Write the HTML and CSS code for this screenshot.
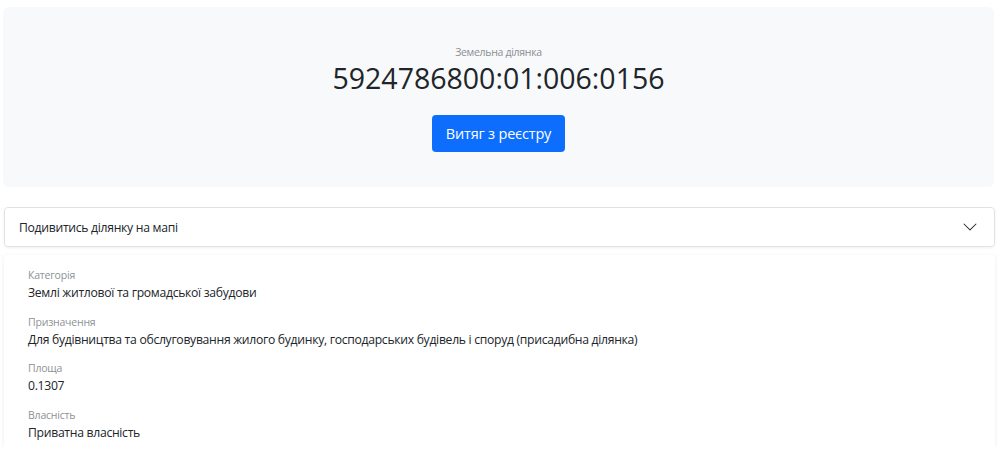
FILE: index.html
```html
<!DOCTYPE html>
<html lang="uk">
<head>
  <meta charset="UTF-8" />
  <meta name="viewport" content="width=device-width, initial-scale=1.0"/>
  <title>Земельна ділянка 5924786800:01:006:0156</title>
  <link rel="stylesheet" href="styles.css">
</head>
<body>

  <div class="page">
    <div class="hero">
      <div class="hero-label">Земельна ділянка</div>
      <h1 class="cadnum">5924786800:01:006:0156</h1>
      <button class="btn-primary">Витяг з реєстру</button>
    </div>

    <div class="accordion">
      <button class="accordion-button">
        <span>Подивитись ділянку на мапі</span>
        <svg class="chevron" width="16" height="16" viewBox="0 0 16 16" fill="#212529">
          <path fill-rule="evenodd" d="M1.646 4.646a.5.5 0 0 1 .708 0L8 10.293l5.646-5.647a.5.5 0 0 1 .708.708l-6 6a.5.5 0 0 1-.708 0l-6-6a.5.5 0 0 1 0-.708z"/>
        </svg>
      </button>
    </div>

    <div class="details">
      <div class="field">
        <div class="field-label">Категорія</div>
        <div class="field-value">Землі житлової та громадської забудови</div>
      </div>
      <div class="field">
        <div class="field-label">Призначення</div>
        <div class="field-value">Для будівництва та обслуговування жилого будинку, господарських будівель і споруд (присадибна ділянка)</div>
      </div>
      <div class="field">
        <div class="field-label">Площа</div>
        <div class="field-value">0.1307</div>
      </div>
      <div class="field">
        <div class="field-label">Власність</div>
        <div class="field-value">Приватна власність</div>
      </div>
    </div>
  </div>

</body>
</html>
```

FILE: styles.css
```css
body {
  margin: 0;
  font-family: 'Open Sans', 'Noto Sans', sans-serif;
  color: #212529;
  background: #fff;
}

.page {
  padding: 7px 5px 0 4px;
}

.hero {
  background: #f7f9fa;
  border-radius: 6px;
  height: 180px;
  box-sizing: border-box;
  padding-top: 37px;
  text-align: center;
  margin-left: -1px;
  margin-right: 1px;
}

.hero-label {
  font-size: 10.5px;
  line-height: 16px;
  letter-spacing: -0.3px;
  color: #8a8f94;
}

.cadnum {
  margin: 0;
  font-size: 28.5px;
  font-weight: 400;
  line-height: 36px;
}

.btn-primary {
  margin-top: 19px;
  width: 133px;
  height: 37px;
  padding: 0;
  font-family: inherit;
  font-size: 14.5px;
  letter-spacing: -0.2px;
  color: #fff;
  background: #0d6efd;
  border: none;
  border-radius: 4px;
  cursor: pointer;
}

.accordion {
  margin-top: 20px;
  border: 1px solid #dfe2e6;
  border-radius: 4px;
  box-shadow: 0 1px 3px rgba(0,0,0,0.06);
}

.accordion-button {
  width: 100%;
  height: 38px;
  display: flex;
  align-items: center;
  justify-content: space-between;
  padding: 0 16px 0 14px;
  background: #fff;
  border: none;
  border-radius: 4px;
  font-family: inherit;
  font-size: 12.2px;
  letter-spacing: -0.3px;
  color: #212529;
  cursor: pointer;
}

.details {
  margin-top: 8px;
  height: 192px;
  box-sizing: border-box;
  padding: 12px 24px 0 24px;
  background: #fff;
  box-shadow: 0 1px 4px rgba(0,0,0,0.08);
}

.field {
  margin-bottom: 11.7px;
}

.field-label {
  font-size: 10.5px;
  line-height: 16px;
  letter-spacing: -0.2px;
  color: #8e9296;
}

.field-value {
  font-size: 12.2px;
  line-height: 19px;
  letter-spacing: -0.3px;
}
```
